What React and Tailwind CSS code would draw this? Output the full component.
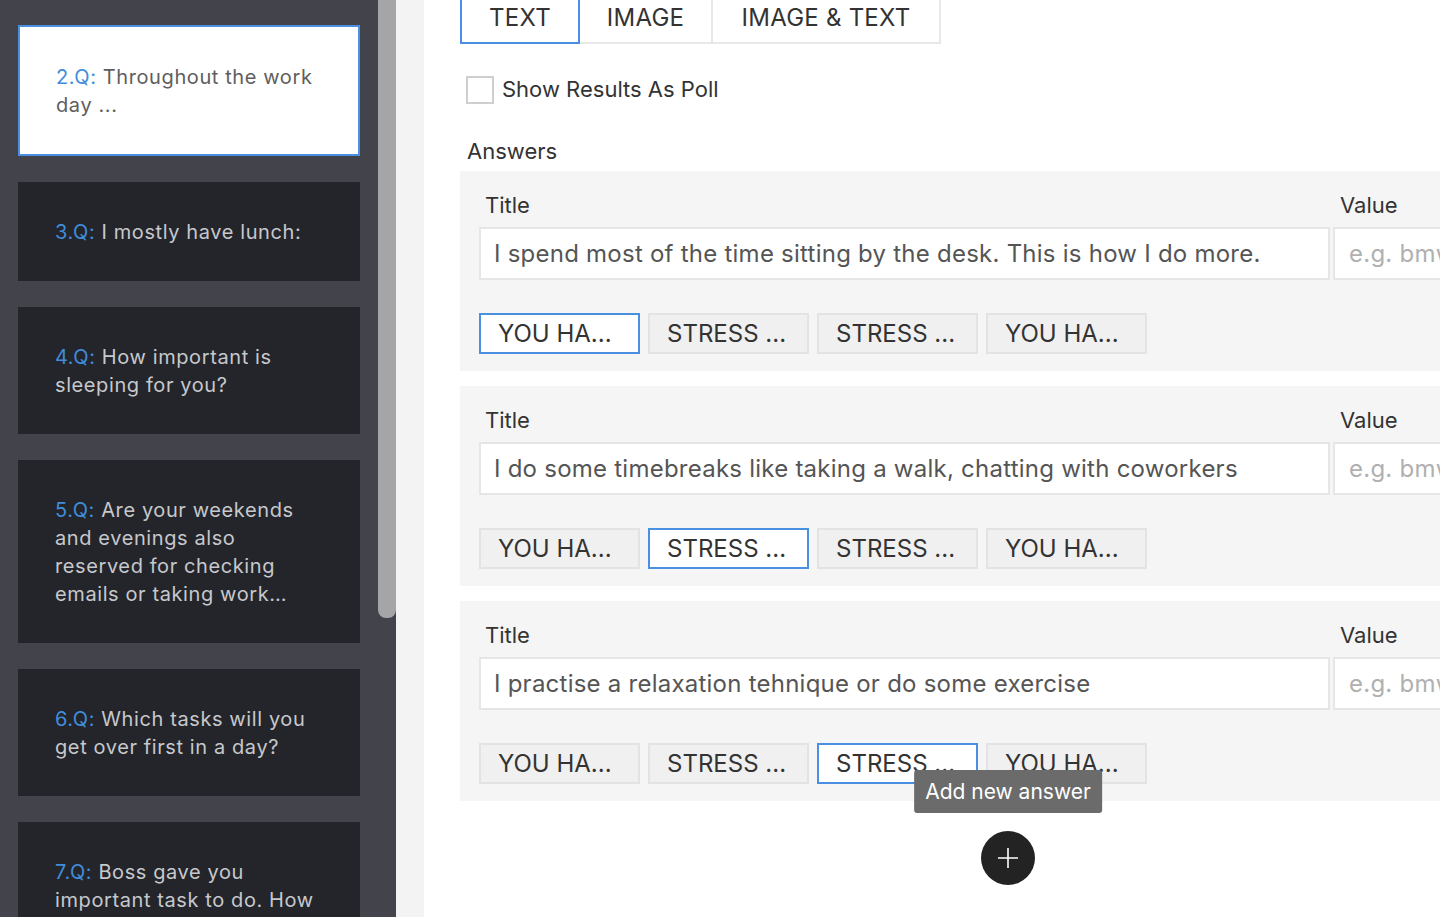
import React from 'react';

const questions = [
  { n: 1, text: 'I am:', active: false },
  { n: 2, text: 'Throughout the work day ...', active: true },
  { n: 3, text: 'I mostly have lunch:', active: false },
  { n: 4, text: 'How important is sleeping for you?', active: false },
  { n: 5, text: 'Are your weekends and evenings also reserved for checking emails or taking work home with you?', active: false },
  { n: 6, text: 'Which tasks will you get over first in a day?', active: false },
  { n: 7, text: 'Boss gave you important task to do. How do you approach it?', active: false },
];

const answers = [
  { title: 'I spend most of the time sitting by the desk. This is how I do more.', selected: 0 },
  { title: 'I do some timebreaks like taking a walk, chatting with coworkers', selected: 1 },
  { title: 'I practise a relaxation tehnique or do some exercise', selected: 2 },
];

const outcomes = ['YOU HA...', 'STRESS ...', 'STRESS ...', 'YOU HA...'];

const QuestionCard = ({ q, first }) => (
  <div
    className={
      (first ? 'mt-[-125px] ' : '') +
      (q.active
        ? 'bg-white border-2 border-[#4a90e2] text-[#5e5e5e] px-[36px] '
        : 'bg-[#23252b] text-[#c7c8cb] px-[37px] ') +
      'py-[35.5px] text-[20px] leading-[28px] tracking-[0.03em] shrink-0'
    }
  >
    <p className="line-clamp-4">
      <span className="text-[#3f8ddb]">{q.n}.Q: </span>
      {q.text}
    </p>
  </div>
);

const AnswerBlock = ({ answer }) => (
  <div className="bg-[#f5f5f5] pl-[19px] pr-[19px] pt-[19px] pb-[17px]">
    <div className="grid grid-cols-[851px_204px] gap-x-[3px]">
      <div className="pl-[6px] text-[22px] leading-[30px] text-[#333] mb-[7px]">Title</div>
      <div className="pl-[7px] text-[22px] leading-[30px] text-[#333] mb-[7px]">Value</div>
      <div className="h-[53px] bg-white border-2 border-[#e6e6e6] flex items-center px-[13px] text-[24px] tracking-[0.01em] text-[#555] whitespace-nowrap overflow-hidden">
        {answer.title}
      </div>
      <div className="h-[53px] bg-white border-2 border-[#e6e6e6] flex items-center px-[14px] text-[24px] tracking-[0.01em] text-[#b0b0b0] whitespace-nowrap overflow-hidden">
        e.g. bmw
      </div>
    </div>
    <div className="flex gap-[8px] mt-[33px]">
      {outcomes.map((o, i) => (
        <button
          key={i}
          className={
            'w-[161px] h-[41px] border-2 flex items-center pl-[17px] text-[24px] text-[#333] ' +
            (i === answer.selected ? 'bg-white border-[#4a90e2]' : 'bg-[#f0f0f0] border-[#e3e3e3]')
          }
        >
          {o}
        </button>
      ))}
    </div>
  </div>
);

export default function App() {
  return (
    <div
      className="w-[1440px] h-[917px] overflow-hidden flex bg-white"
      style={{ fontFamily: 'Inter, "Noto Sans", sans-serif' }}
    >
      {/* sidebar */}
      <div className="w-[396px] shrink-0 h-full bg-[#43444b] flex">
        <div className="w-[378px] pl-[18px] pr-[18px] pt-[25px] flex flex-col gap-[26px] overflow-hidden">
          {questions.map((q, i) => (
            <QuestionCard key={q.n} q={q} first={i === 0} />
          ))}
        </div>
        <div className="w-[18px] h-full">
          <div className="h-[618px] bg-[#a5a5a8] rounded-b-[8px]" />
        </div>
      </div>
      <div className="w-[28px] shrink-0 h-full bg-[#f3f3f3]" />

      {/* main */}
      <div className="flex-1 pl-[36px] overflow-hidden">
        <div className="w-[1096px]">
          <div className="flex mt-[-8px] h-[52px]">
            <div className="w-[120px] border-2 border-[#4a90e2] flex items-center justify-center text-[24px] tracking-[0.01em] text-[#333]">TEXT</div>
            <div className="w-[133px] border-2 border-l-0 border-[#e8e8e8] flex items-center justify-center text-[24px] tracking-[0.01em] text-[#333]">IMAGE</div>
            <div className="w-[228px] border-2 border-l-0 border-[#e8e8e8] flex items-center justify-center text-[24px] tracking-[0.01em] text-[#333]">IMAGE &amp; TEXT</div>
          </div>

          <label className="flex items-center gap-[8px] mt-[29px] ml-[6px]">
            <span className="w-[28px] h-[28px] border-2 border-[#cfcfcf] bg-white" />
            <span className="text-[22px] text-[#333]">Show Results As Poll</span>
          </label>

          <div className="mt-[30px] ml-[7px] text-[22px] leading-[30px] text-[#333]">Answers</div>

          <div className="mt-[5px] flex flex-col gap-[15px]">
            {answers.map((a, i) => (
              <AnswerBlock key={i} answer={a} />
            ))}
          </div>

          <div className="flex justify-center mt-[30px]">
            <div className="relative">
              <div className="absolute bottom-[72px] left-1/2 -translate-x-1/2 whitespace-nowrap bg-[#6b6b6b] text-white text-[21px] leading-[30px] px-[11px] py-[6.5px] rounded-[3px]">
                Add new answer
              </div>
              <button className="w-[54px] h-[54px] rounded-full bg-[#232323] flex items-center justify-center">
                <svg width="24" height="24" viewBox="0 0 24 24" fill="none" stroke="white" strokeWidth="1.6">
                  <path d="M12 2v20M2 12h20" />
                </svg>
              </button>
            </div>
          </div>
        </div>
      </div>
    </div>
  );
}
